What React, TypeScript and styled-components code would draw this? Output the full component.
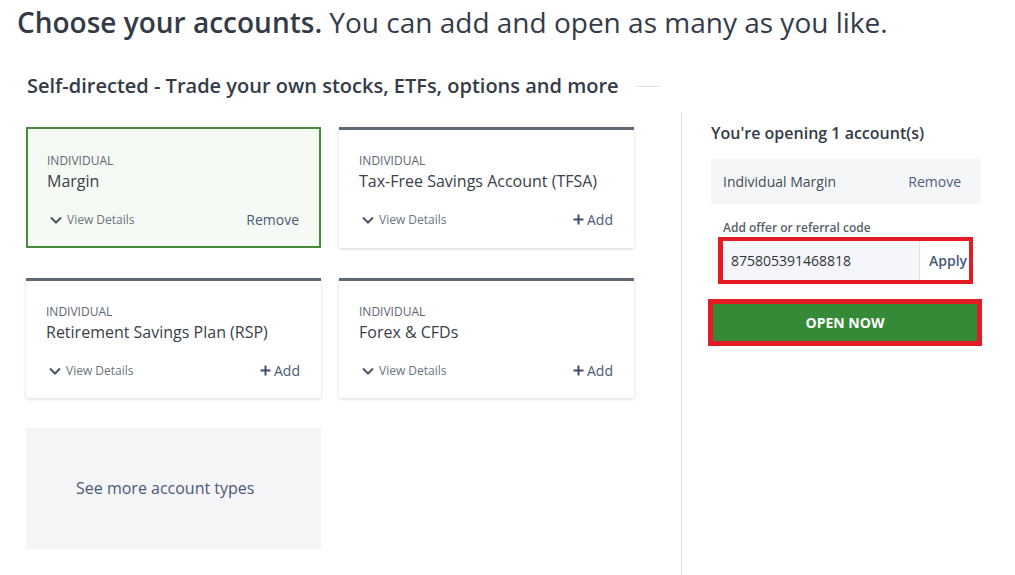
import styled, { createGlobalStyle } from "styled-components";

const GlobalStyles = createGlobalStyle`
  body {
    margin: 0;
    background: #fff;
    font-family: "Open Sans", "Liberation Sans", sans-serif;
    color: #333a45;
  }
`;

const Page = styled.div`
  width: 1015px;
  height: 575px;
  overflow: hidden;
  padding-left: 17px;
  box-sizing: border-box;
`;

const Heading = styled.h1`
  margin: 0;
  padding-top: 3px;
  font-size: 28px;
  line-height: 38px;
  font-weight: 400;
  color: #343b47;
  strong {
    font-weight: 600;
  }
`;

const SectionTitle = styled.div`
  display: flex;
  align-items: center;
  gap: 18px;
  width: 633px;
  margin: 31px 0 0 10px;
  font-size: 20px;
  line-height: 28px;
  font-weight: 600;
  color: #343b47;
  &::after {
    content: "";
    flex: 1;
    height: 1px;
    background: #dcdfe3;
  }
`;

const Body = styled.div`
  display: flex;
  margin-top: 12px;
  height: 470px;
`;

const LeftCol = styled.div`
  width: 664px;
  padding: 15px 0 0 9px;
  box-sizing: border-box;
`;

const Grid = styled.div`
  display: grid;
  grid-template-columns: 295px 295px;
  grid-template-rows: 121px 120px 121px;
  column-gap: 18px;
  row-gap: 30px;
`;

const Card = styled.div<{ $selected?: boolean }>`
  box-sizing: border-box;
  padding: ${(p) => (p.$selected ? "24px 20px 0 19px" : "23px 21px 0 20px")};
  background: ${(p) => (p.$selected ? "#f6faf4" : "#fff")};
  border: ${(p) => (p.$selected ? "2px solid #4a8a3f" : "none")};
  border-top: ${(p) => (p.$selected ? "2px solid #4a8a3f" : "3px solid #5f6975")};
  box-shadow: ${(p) => (p.$selected ? "none" : "0 1px 3px rgba(0,0,0,0.16)")};
  display: flex;
  flex-direction: column;
`;

const Kind = styled.div`
  font-size: 12px;
  line-height: 16px;
  color: #5d6670;
`;

const Name = styled.div`
  font-size: 16px;
  line-height: 24px;
  color: #3a4048;
`;

const CardFoot = styled.div`
  display: flex;
  justify-content: space-between;
  align-items: center;
  margin-top: 17px;
`;

const Details = styled.span`
  display: flex;
  align-items: center;
  gap: 5px;
  font-size: 12px;
  color: #6b737c;
  padding-left: 3px;
`;

const Action = styled.span`
  display: flex;
  align-items: center;
  gap: 3px;
  font-size: 14px;
  color: #485a77;
`;

const MoreCard = styled.div`
  background: #f5f5f8;
  display: flex;
  align-items: center;
  padding-left: 50px;
  padding-bottom: 2px;
  font-size: 16px;
  color: #4a5b78;
`;

const Divider = styled.div`
  width: 1px;
  background: #dddfe2;
`;

const RightCol = styled.div`
  width: 270px;
  padding: 11px 0 0 29px;
`;

const PanelTitle = styled.div`
  font-size: 16px;
  line-height: 20px;
  font-weight: 600;
  color: #343b47;
`;

const Selected = styled.div`
  margin-top: 16px;
  height: 45px;
  background: #f5f6f8;
  display: flex;
  align-items: center;
  justify-content: space-between;
  padding: 0 20px 0 12px;
  font-size: 14px;
  color: #464c54;
  span:last-child {
    color: #4f5f7c;
  }
`;

const CodeLabel = styled.div`
  margin: 17px 0 0 12px;
  font-size: 12px;
  line-height: 14px;
  color: #5a6068;
  font-weight: 600;
`;

const CodeBox = styled.div`
  margin: 2px 0 0 7px;
  width: 255px;
  height: 47px;
  box-sizing: border-box;
  border: 4px solid #e21b24;
  border-left-width: 5px;
  display: flex;
`;

const CodeInput = styled.div`
  flex: 1;
  background: #f5f6f9;
  display: flex;
  align-items: center;
  padding-left: 8px;
  font-size: 14px;
  color: #2f343a;
`;

const ApplyBtn = styled.div`
  width: 50px;
  border-left: 1px solid #dfe1e5;
  background: #fff;
  display: flex;
  align-items: center;
  padding-left: 9px;
  box-sizing: border-box;
  font-size: 14px;
  font-weight: 600;
  color: #4a5b78;
  overflow: hidden;
`;

const OpenBtn = styled.div`
  margin: 15px 0 0 -3px;
  width: 274px;
  height: 47px;
  box-sizing: border-box;
  border: 5px solid #e21b24;
  background: #358a37;
  color: #fff;
  font-size: 14px;
  font-weight: 700;
  display: flex;
  align-items: center;
  justify-content: center;
`;

const Chevron = () => (
  <svg width="12" height="8" viewBox="0 0 12 8">
    <path d="M1 1.5 L6 6.5 L11 1.5" fill="none" stroke="#4a5566" strokeWidth="2" />
  </svg>
);

const Plus = () => (
  <svg width="11" height="11" viewBox="0 0 11 11">
    <path d="M5.5 0.5 V10.5 M0.5 5.5 H10.5" stroke="#3d4e6c" strokeWidth="2" />
  </svg>
);

const accounts = [
  { name: "Margin", selected: true },
  { name: "Tax-Free Savings Account (TFSA)" },
  { name: "Retirement Savings Plan (RSP)" },
  { name: "Forex & CFDs" },
];

const App = () => {
  return (
    <>
      <GlobalStyles />
      <Page>
        <Heading>
          <strong>Choose your accounts.</strong> You can add and open as many as you like.
        </Heading>
        <SectionTitle>Self-directed - Trade your own stocks, ETFs, options and more</SectionTitle>
        <Body>
          <LeftCol>
            <Grid>
              {accounts.map((a) => (
                <Card key={a.name} $selected={a.selected}>
                  <Kind>INDIVIDUAL</Kind>
                  <Name>{a.name}</Name>
                  <CardFoot>
                    <Details>
                      <Chevron />
                      View Details
                    </Details>
                    {a.selected ? (
                      <Action>Remove</Action>
                    ) : (
                      <Action>
                        <Plus />
                        Add
                      </Action>
                    )}
                  </CardFoot>
                </Card>
              ))}
              <MoreCard>See more account types</MoreCard>
            </Grid>
          </LeftCol>
          <Divider />
          <RightCol>
            <PanelTitle>You're opening 1 account(s)</PanelTitle>
            <Selected>
              <span>Individual Margin</span>
              <span>Remove</span>
            </Selected>
            <CodeLabel>Add offer or referral code</CodeLabel>
            <CodeBox>
              <CodeInput>875805391468818</CodeInput>
              <ApplyBtn>Apply</ApplyBtn>
            </CodeBox>
            <OpenBtn>OPEN NOW</OpenBtn>
          </RightCol>
        </Body>
      </Page>
    </>
  );
};

export default App;
